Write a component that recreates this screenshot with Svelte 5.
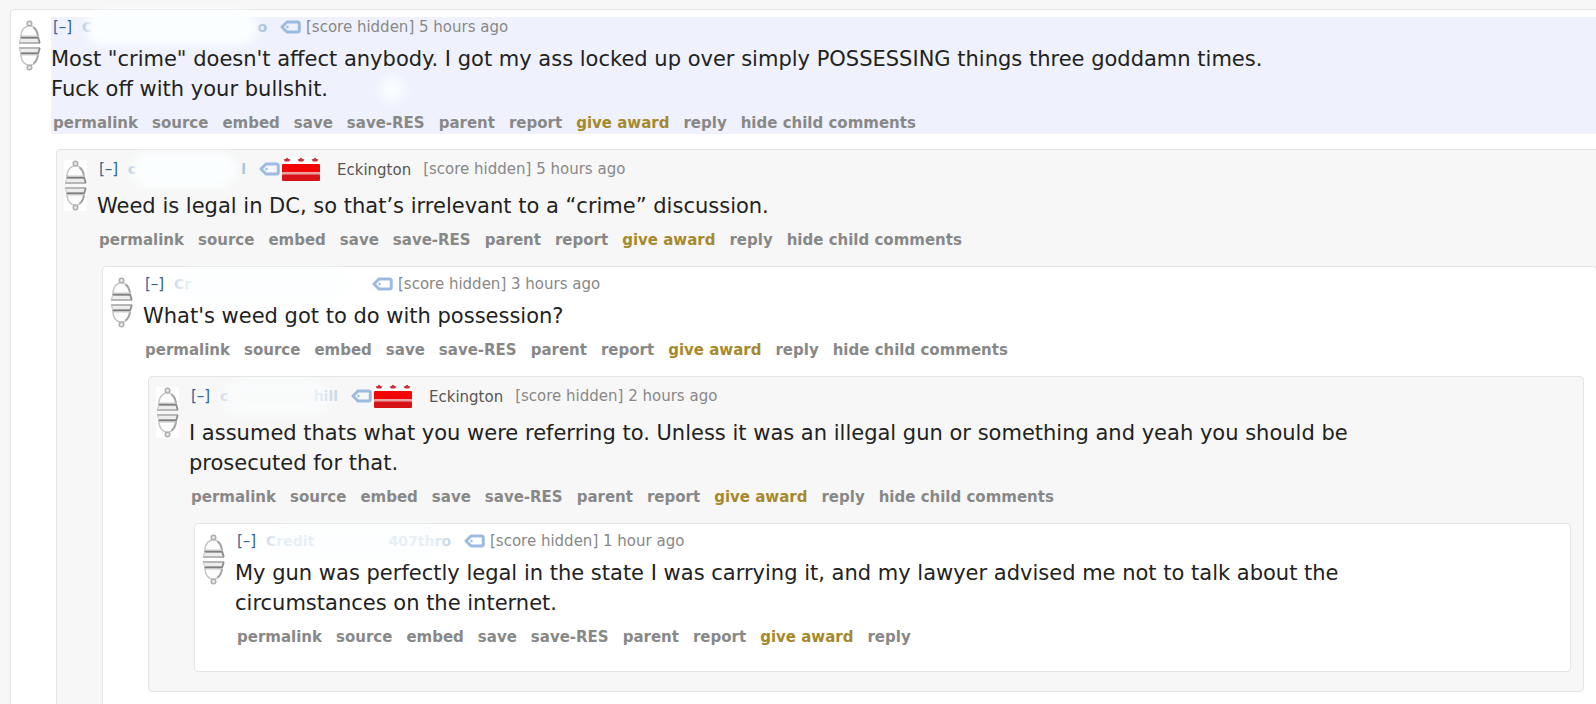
<script lang="ts">
  type Comment = {
    start: string;
    end: string;
    soft?: boolean;
    authorWidth: number;
    flair?: string;
    age: string;
    body: string;
    selected?: boolean;
    child?: Comment;
  };

  const thread: Comment = {
    start: 'C', end: 'o', authorWidth: 185,
    age: '5 hours ago',
    selected: true,
    body: `Most "crime" doesn't affect anybody. I got my ass locked up over simply POSSESSING things three goddamn times. Fuck off with your bullshit.`,
    child: {
      start: 'c', end: 'l', authorWidth: 118, flair: 'Eckington',
      age: '5 hours ago',
      body: 'Weed is legal in DC, so that’s irrelevant to a “crime” discussion.',
      child: {
        start: 'Cr', end: '', soft: true, authorWidth: 185,
        age: '3 hours ago',
        body: "What's weed got to do with possession?",
        child: {
          start: 'c', end: 'hill', soft: true, authorWidth: 118, flair: 'Eckington',
          age: '2 hours ago',
          body: 'I assumed thats what you were referring to. Unless it was an illegal gun or something and yeah you should be prosecuted for that.',
          child: {
            start: 'Credit', end: '407thro', soft: true, authorWidth: 185,
            age: '1 hour ago',
            body: 'My gun was perfectly legal in the state I was carrying it, and my lawyer advised me not to talk about the circumstances on the internet.'
          }
        }
      }
    }
  };

  const actions = ['permalink', 'source', 'embed', 'save', 'save-RES', 'parent', 'report', 'give award', 'reply'];
</script>

{#snippet bell()}
  <svg viewBox="0 0 23 24" width="23" height="24" aria-hidden="true">
    <rect width="23" height="24" fill="#fff" />
    <path d="M3 15C3.500 10 6 6.500 11.500 5.500C17 6.500 19.500 10 20 15V17H3Z" fill="#fcfcfc" stroke="#c4c4c4" stroke-width="1.500" />
    <path d="M15.500 7.500C18 9.500 19.500 12 19.800 16" fill="none" stroke="#a3a3a3" stroke-width="1.800" />
    <circle cx="11.500" cy="3.500" r="2.300" fill="#e6e6e6" stroke="#b0b0b0" stroke-width="1.500" />
    <path d="M3 16H20" stroke="#ccc" stroke-width="1" />
    <path d="M2.500 17.800H20.500" stroke="#7d7d7d" stroke-width="1.800" />
    <path d="M2 20.500H21" stroke="#ededed" stroke-width="3" />
    <path d="M1 23H22" stroke="#a5a5a5" stroke-width="1.600" />
    <path d="M20 17L21.800 23" stroke="#8c8c8c" stroke-width="1.800" />
    <path d="M3 18L1 23" stroke="#ccc" stroke-width="1.200" />
  </svg>
{/snippet}

{#snippet comment(c: Comment, depth: number)}
  <article class="comment" class:odd={depth % 2 === 1}>
    <div class="votes">
      <button aria-label="upvote">{@render bell()}</button>
      <button class="down" aria-label="downvote">{@render bell()}</button>
    </div>
    <div class="entry" class:selected={c.selected}>
      <p class="tagline" class:flaired={c.flair}>
        <a class="fold" href="#fold">[–]</a>
        <span class="author" class:soft={c.soft} style:width="{c.authorWidth}px">
          <span>{c.start}</span><span>{c.end}</span>
        </span>
        <svg class="tag" viewBox="0 0 21 14" width="21" height="14" aria-hidden="true">
          <path d="M7 2H17.500Q19.300 2 19.300 4V10Q19.300 12 17.500 12H7L2 7Z" fill="none" stroke="#9bbce0" stroke-width="3" stroke-linejoin="round" />
          <circle cx="7.500" cy="7" r="1.200" fill="#9bbce0" />
        </svg>
        {#if c.flair}
          <svg class="flag" viewBox="0 0 38 24" width="38" height="24" aria-hidden="true">
            <rect width="38" height="24" rx="1" fill="#fff" />
            <path d="M1.500 2.500L3.500 2 5 0.500 6.500 2 8.500 2.500 7 4.500H3ZM15.500 2.500L17.500 2 19 0.500 20.500 2 22.500 2.500 21 4.500H17ZM29.500 2.500L31.500 2 33 0.500 34.500 2 36.500 2.500 35 4.500H31Z" fill="#c9303a" />
            <rect y="7" width="38" height="9" rx="1" fill="#f40505" />
            <rect y="15" width="38" height="3" fill="#e9a3a3" />
            <rect y="17.500" width="38" height="6.500" rx="1" fill="#d61417" />
          </svg>
          <span class="flair">{c.flair}</span>
        {/if}
        <span class="meta">[score hidden] {c.age}</span>
      </p>
      <p class="body">{c.body}</p>
      <ul class="actions">
        {#each actions as a}
          <li><a href="#action" class:gold={a === 'give award'}>{a}</a></li>
        {/each}
        {#if c.child}<li><a href="#action">hide child comments</a></li>{/if}
      </ul>
    </div>
    {#if c.child}
      <div class="child">{@render comment(c.child, depth + 1)}</div>
    {/if}
  </article>
{/snippet}

<main>{@render comment(thread, 0)}</main>

<style>
  :global(body) {
    background: #f7f7f7;
    overflow: hidden;
  }
  main {
    font-family: "DejaVu Sans", Verdana, sans-serif;
    padding: 9px 0 0 10px;
    margin-right: -27px;
  }
  .comment {
    display: grid;
    grid-template-columns: 33px minmax(0, 1fr);
    border: 1px solid #e4e4e4;
    border-radius: 4px;
    background: #fff;
    padding: 7px 12px 19px 7px;
  }
  .comment.odd {
    background: #f7f7f7;
  }
  .votes {
    display: flex;
    flex-direction: column;
    gap: 3px;
    padding-top: 3px;
  }
  .votes button {
    display: block;
    width: 23px;
    height: 24px;
    padding: 0;
    border: 0;
    background: none;
  }
  .votes svg {
    display: block;
  }
  .down {
    transform: scaleY(-1);
  }
  .entry:last-child {
    margin-bottom: 4px;
  }
  .entry.selected {
    position: relative;
    background: #eff2fc;
  }
  .entry.selected::after {
    content: "";
    position: absolute;
    left: 322px;
    top: 54px;
    width: 38px;
    height: 38px;
    border-radius: 50%;
    background: radial-gradient(#fafdff 10%, transparent 70%);
  }
  .tagline {
    display: flex;
    align-items: center;
    margin: 0;
    padding-left: 2px;
    font-size: 15px;
    line-height: 20px;
    color: #888;
    white-space: nowrap;
  }
  .tagline.flaired {
    padding-bottom: 3px;
  }
  a {
    text-decoration: none;
  }
  .fold {
    color: #369;
    width: 29px;
  }
  .author {
    position: relative;
    display: flex;
    justify-content: space-between;
    font-weight: bold;
    font-size: 14px;
    color: #a5c3e0;
  }
  .author.soft {
    color: #c9dae8;
  }
  .author::after {
    content: "";
    position: absolute;
    left: 4px;
    right: 10px;
    top: -6px;
    bottom: -8px;
    border-radius: 16px;
    background: #fbfeff;
    filter: blur(5px);
  }
  .author.soft::after {
    opacity: 0.6;
  }
  .tag {
    margin-left: 13px;
  }
  .flag {
    margin-left: 2px;
  }
  .flair {
    margin: 2px 7px 0 17px;
    color: #555;
  }
  .meta {
    margin-left: 5px;
  }
  .body {
    margin: 7px 0 0;
    max-width: 60em;
    font-size: 21px;
    line-height: 30px;
    color: #222;
  }
  .actions {
    display: flex;
    gap: 14px;
    margin: 0;
    padding: 9px 0 1px 2px;
    list-style: none;
    font-size: 15px;
    line-height: 20px;
    font-weight: bold;
    white-space: nowrap;
  }
  .actions a {
    color: #888;
  }
  .actions a.gold {
    color: #a6892c;
  }
  .child {
    grid-column: 1 / -1;
    margin: 15px 0 0 38px;
  }
</style>
